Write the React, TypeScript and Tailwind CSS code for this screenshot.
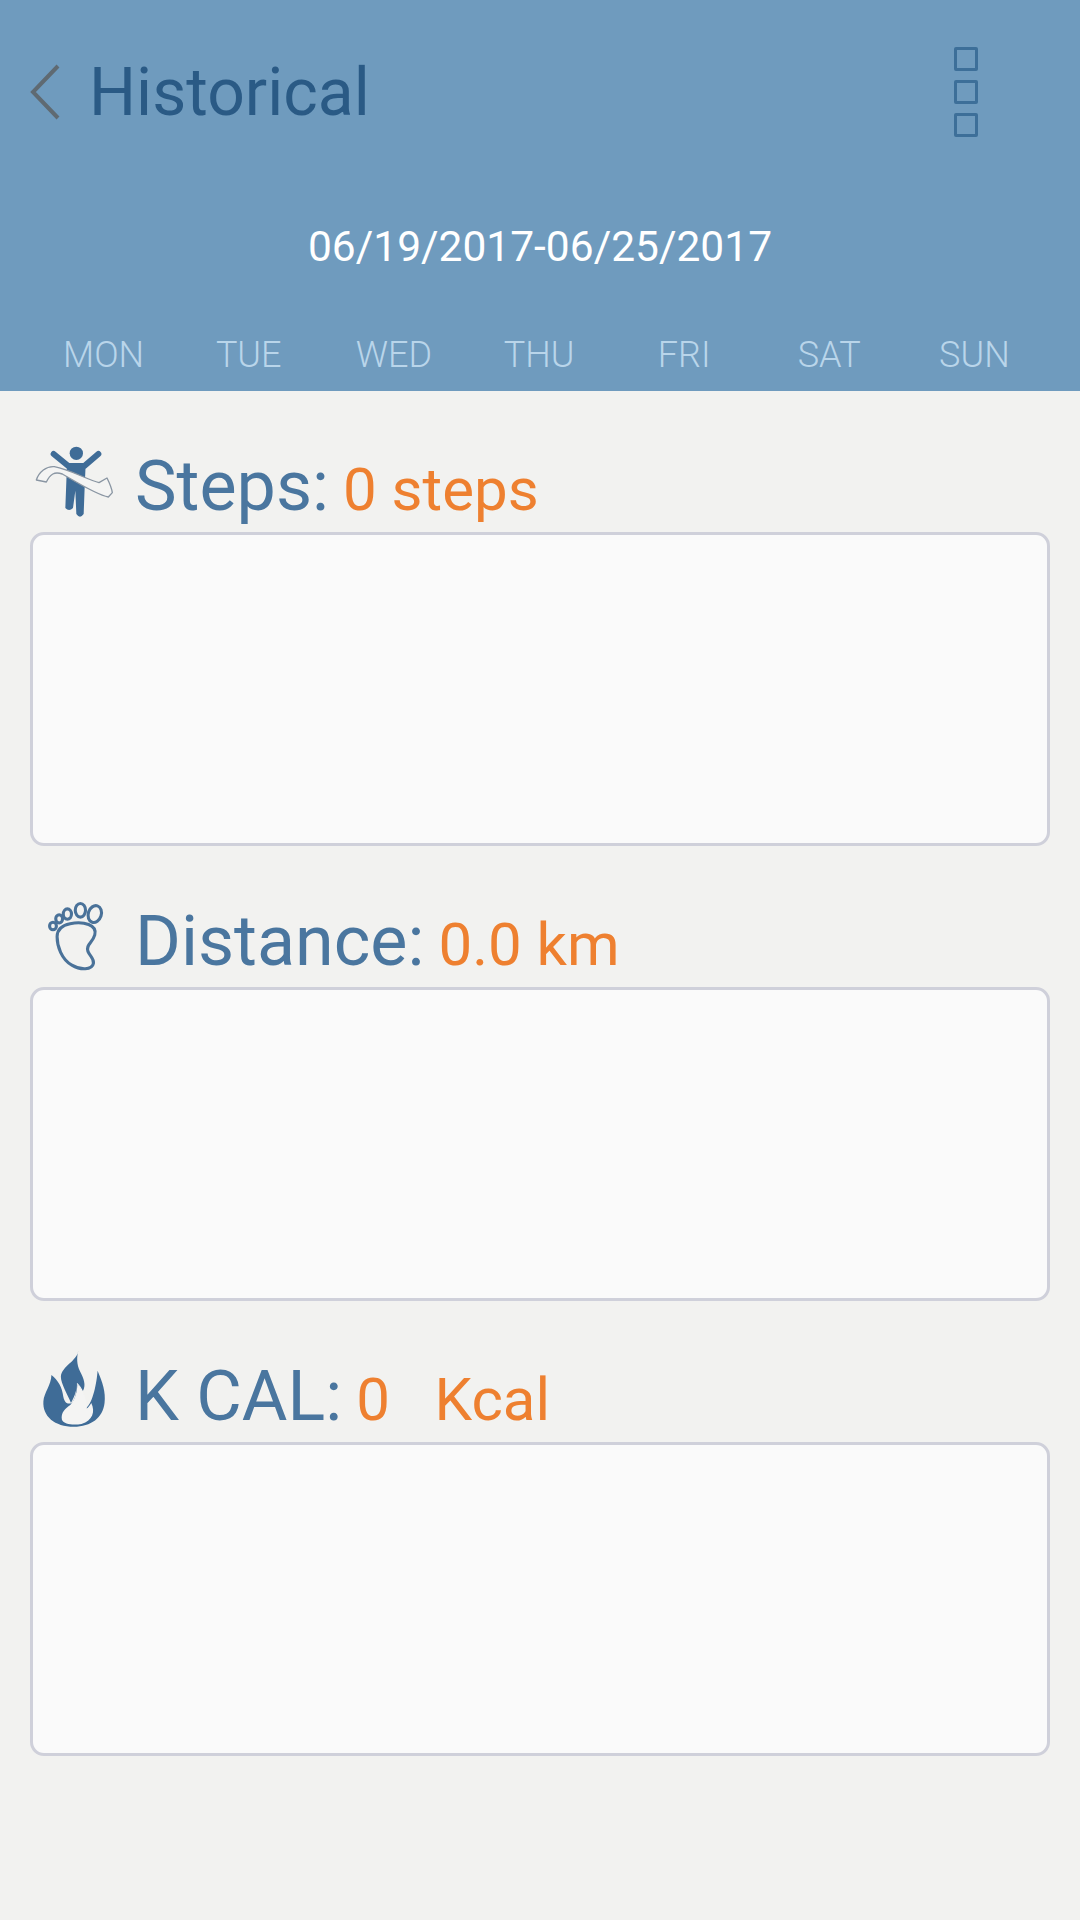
const days = ["MON", "TUE", "WED", "THU", "FRI", "SAT", "SUN"];

const RunnerIcon = () => (
  <svg width="84" height="74" viewBox="40 40 252 222" className="ml-[3px] mb-[14px]">
    <circle cx="170" cy="68" r="20" fill="#3f6c97" />
    <path d="M102 70 L146 106 H194 L236 70" fill="none" stroke="#3f6c97" strokeWidth="18" strokeLinecap="round" strokeLinejoin="round" />
    <path d="M142 100 H198 L195 170 L192 250 Q181 266 170 250 L167 180 L160 232 Q148 244 137 232 Z" fill="#3f6c97" />
    <path d="M50 148 C58 124 80 106 104 108 C150 116 205 148 238 156 L262 142 C270 158 276 172 278 186 L266 199 C230 192 180 160 128 130 C104 122 92 130 80 154 C70 152 60 150 50 148 Z" fill="#f4f4f3" stroke="#8a96a3" strokeWidth="4" strokeLinejoin="round" />
  </svg>
);

const FootIcon = () => (
  <svg width="64" height="74" viewBox="50 35 186 216" className="ml-[16px] mb-[13px]">
    <g fill="none" stroke="#4a7299" strokeWidth="9">
      <ellipse cx="192" cy="76" rx="19" ry="25" transform="rotate(18 192 76)" />
      <ellipse cx="150" cy="65" rx="15" ry="20" />
      <ellipse cx="112" cy="76" rx="12" ry="15" />
      <ellipse cx="88" cy="90" rx="10" ry="12" />
      <ellipse cx="70" cy="111" rx="10" ry="11" />
      <path d="M120 104 C160 96 200 108 192 137 C186 160 165 165 172 185 C178 200 190 205 188 220 C184 240 150 240 125 225 C95 208 82 170 82 142 C82 118 100 108 120 104 Z" />
    </g>
  </svg>
);

const FlameIcon = () => (
  <svg width="65" height="80" viewBox="39 36 186 228" className="ml-[12px] mb-[13px]">
    <path d="M130 258 C75 258 40 228 43 185 C45 160 65 140 66 110 C85 125 97 145 100 172 C104 190 112 195 125 190 C135 175 138 160 138 135 C155 150 165 185 165 205 C185 190 196 130 198 98 C212 130 222 160 218 190 C213 232 180 258 130 258 Z" fill="#3f6c97" />
    <path d="M143 40 C140 70 95 85 93 115 C93 135 112 165 122 190 C132 172 140 150 139 132 C146 138 152 146 156 156 C166 138 158 120 148 100 C138 80 138 60 143 40 Z" fill="#3f6c97" />
    <path d="M96 238 C92 218 106 205 120 196 C134 180 140 158 140 136 C158 155 168 182 167 206 C172 202 177 196 180 190 C192 215 184 240 152 250 C130 254 102 252 96 238 Z" fill="#f4f4f3" />
  </svg>
);

interface SectionProps {
  icon: React.ReactNode;
  label: string;
  value: React.ReactNode;
}

const Section = (props: SectionProps) => {
  const { icon, label, value } = props;

  return (
    <section className="mt-[53px]">
      <div className="flex items-end h-[88px] px-[30px]">
        <div className="w-[105px] shrink-0">{icon}</div>
        <div className="flex items-baseline leading-none mb-[11px]">
          <span className="text-[70px] leading-none text-[#4a769f]">{label}</span>
          <span className="ml-[14px] text-[60px] leading-none text-[#ee8030] whitespace-pre">{value}</span>
        </div>
      </div>
      <div className="mx-[30px] h-[314px] rounded-[14px] border-[3px] border-[#cfd0da] bg-[#fafafa]" />
    </section>
  );
};

export default function App() {
  return (
    <div className="min-h-[1920px] bg-[#f2f2f0] font-['Roboto',sans-serif]">
      <header className="h-[391px] bg-[#6f9bbe] flex flex-col">
        <div className="flex items-center h-[184px] pl-[30px] pr-[102px]">
          <svg width="30" height="56" viewBox="0 0 30 56" className="shrink-0">
            <path d="M28 2 L3 28 L28 54" fill="none" stroke="#5f6a72" strokeWidth="4" />
          </svg>
          <h1 className="ml-[29px] mt-[2px] flex-1 text-[66px] leading-none text-[#2a5a85]">Historical</h1>
          <div className="flex flex-col gap-[9px]">
            <span className="block w-[24px] h-[24px] border-[3px] border-[#3d6f99] rounded-[2px]" />
            <span className="block w-[24px] h-[24px] border-[3px] border-[#3d6f99] rounded-[2px]" />
            <span className="block w-[24px] h-[24px] border-[3px] border-[#3d6f99] rounded-[2px]" />
          </div>
        </div>
        <div className="mt-[42px] text-center text-[42.5px] leading-none text-white">06/19/2017-06/25/2017</div>
        <div className="grid grid-cols-7 pl-[31px] pr-[33px] mt-[68px]">
          {days.map((day) => (
            <div key={day} className="text-center text-[36px] leading-none font-light text-[#b9d5ea]">
              {day}
            </div>
          ))}
        </div>
      </header>
      <Section icon={<RunnerIcon />} label="Steps:" value="0 steps" />
      <Section icon={<FootIcon />} label="Distance:" value="0.0 km" />
      <Section icon={<FlameIcon />} label="K CAL:" value="0   Kcal" />
    </div>
  );
}
